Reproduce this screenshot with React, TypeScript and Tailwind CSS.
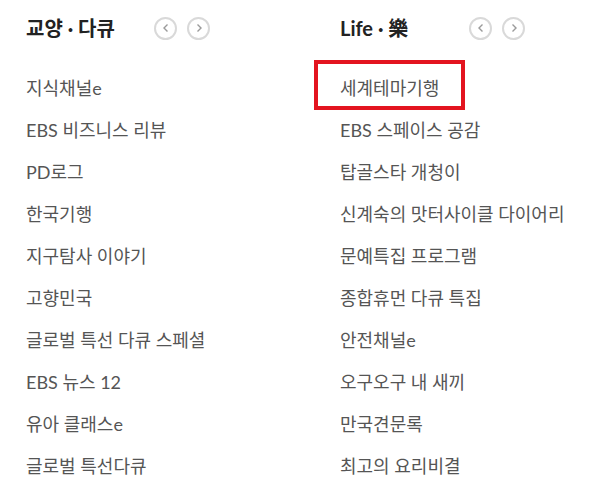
import React from "react";

const left = [
  "지식채널e",
  "EBS 비즈니스 리뷰",
  "PD로그",
  "한국기행",
  "지구탐사 이야기",
  "고향민국",
  "글로벌 특선 다큐 스페셜",
  "EBS 뉴스 12",
  "유아 클래스e",
  "글로벌 특선다큐",
];
const right = [
  "세계테마기행",
  "EBS 스페이스 공감",
  "탑골스타 개청이",
  "신계숙의 맛터사이클 다이어리",
  "문예특집 프로그램",
  "종합휴먼 다큐 특집",
  "안전채널e",
  "오구오구 내 새끼",
  "만국견문록",
  "최고의 요리비결",
];

function Circle({ dir }: { dir: "l" | "r" }) {
  return (
    <span className="flex h-[23px] w-[23px] items-center justify-center rounded-full border-2 border-[#d9d9d9] bg-white">
      <svg width="10" height="10" viewBox="0 0 10 10">
        {dir === "l" ? (
          <path d="M6.5 1.5 L3 5 L6.5 8.5" fill="none" stroke="#9a9a9a" strokeWidth="1.4" />
        ) : (
          <path d="M3.5 1.5 L7 5 L3.5 8.5" fill="none" stroke="#9a9a9a" strokeWidth="1.4" />
        )}
      </svg>
    </span>
  );
}

function Column({ title, items, headW, highlight }: { title: string; items: string[]; headW: string; highlight?: boolean }) {
  return (
    <div className="relative w-[314px] shrink-0">
      <div className="flex h-[56px] items-center">
        <div className={`${headW} whitespace-nowrap text-[20px] font-bold text-[#222]`}>{title}</div>
        <div className="flex gap-[10px]">
          <Circle dir="l" />
          <Circle dir="r" />
        </div>
      </div>
      <ul className="mt-[11px] flex flex-col">
        {items.map((t) => (
          <li key={t} className="flex h-[42px] items-center whitespace-nowrap text-[18px] text-[#555]">
            {t}
          </li>
        ))}
      </ul>
      {highlight && (
        <div className="absolute left-[-26px] top-[60px] h-[50px] w-[151px] border-4 border-[#e3141f]" />
      )}
    </div>
  );
}

export default function App() {
  return (
    <div
      className="h-[493px] w-[609px] overflow-hidden bg-white pl-[26px]"
      style={{ fontFamily: "Lato, 'Noto Sans CJK KR', sans-serif" }}
    >
      <div className="flex">
        <Column title="교양 · 다큐" items={left} headW="w-[128px]" />
        <Column title="Life · 樂" items={right} headW="w-[129px]" highlight />
      </div>
    </div>
  );
}
